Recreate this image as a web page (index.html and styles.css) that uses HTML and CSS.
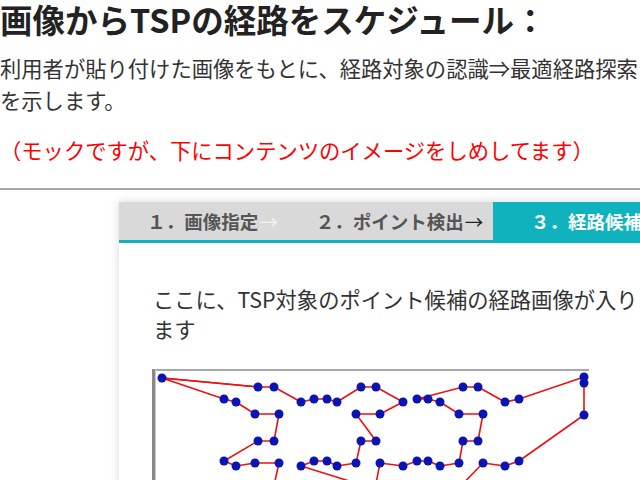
FILE: index.html
```html
<!DOCTYPE html>
<html lang="ja">
<head>
<meta charset="utf-8">
<title>TSP</title>
<link rel="stylesheet" href="styles.css">
</head>
<body>
<div class="page">
  <h1 class="title">画像からTSPの経路をスケジュール：</h1>
  <p class="lead">利用者が貼り付けた画像をもとに、経路対象の認識⇒最適経路探索を示します。</p>
  <p class="note">（モックですが、下にコンテンツのイメージをしめしてます）</p>
  <hr class="rule">
  <section class="panel">
    <div class="tabs">
      <div class="tab">１．画像指定<span class="arrow arrow-light">→</span></div>
      <div class="tab">２．ポイント検出<span class="arrow">→</span></div>
      <div class="tab tab-active">３．経路候補</div>
    </div>
    <div class="panel-body">
      <p class="desc">ここに、TSP対象のポイント候補の経路画像が入ります</p>
      <svg class="route" width="437" height="130" viewBox="0 0 437 130" xmlns="http://www.w3.org/2000/svg">
        <rect x="0" y="0" width="437" height="2" fill="#a8a8a8"/>
        <rect x="0" y="0" width="3" height="130" fill="#8a8a8a"/>
        <rect x="3" y="0" width="1" height="130" fill="#c8c8c8"/>
        <g fill="none" stroke="#ee1111" stroke-width="1.6" stroke-linejoin="round">
          <polyline points="106,18 10,9 72,30 84,33 103,45 127,45 122,72 106,72 72,92 84,97 103,94 127,94 119,130"/>
          <polyline points="10,9 106,18 122,18 149,33 162,30 175,30 185,33 209,18 224,18 251,33 228,45 204,45 224,72 209,72 204,94 185,97 175,92 162,92 149,97 255,130"/>
          <polyline points="221,130 228,94 251,97 265,92 276,92 288,97 307,94 311,72 326,72 331,45 307,45 288,33 276,30 265,30 311,18 326,18 353,33 367,30 432,8 432,14 432,46 367,92 353,97 331,94 296,130"/>
        </g>
        <g fill="#0a14b4">
          <circle cx="10" cy="9" r="4.5"/>
          <circle cx="106" cy="18" r="4.5"/><circle cx="122" cy="18" r="4.5"/>
          <circle cx="72" cy="30" r="4.5"/><circle cx="84" cy="33" r="4.5"/>
          <circle cx="149" cy="33" r="4.5"/><circle cx="162" cy="30" r="4.5"/><circle cx="175" cy="30" r="4.5"/><circle cx="185" cy="33" r="4.5"/>
          <circle cx="209" cy="18" r="4.5"/><circle cx="224" cy="18" r="4.5"/>
          <circle cx="103" cy="45" r="4.5"/><circle cx="127" cy="45" r="4.5"/>
          <circle cx="204" cy="45" r="4.5"/><circle cx="228" cy="45" r="4.5"/>
          <circle cx="106" cy="72" r="4.5"/><circle cx="122" cy="72" r="4.5"/>
          <circle cx="209" cy="72" r="4.5"/><circle cx="224" cy="72" r="4.5"/>
          <circle cx="72" cy="92" r="4.5"/><circle cx="84" cy="97" r="4.5"/><circle cx="103" cy="94" r="4.5"/><circle cx="127" cy="94" r="4.5"/>
          <circle cx="149" cy="97" r="4.5"/><circle cx="162" cy="92" r="4.5"/><circle cx="175" cy="92" r="4.5"/><circle cx="185" cy="97" r="4.5"/><circle cx="204" cy="94" r="4.5"/>
          <circle cx="228" cy="94" r="4.5"/>
          <circle cx="251" cy="33" r="4.5"/>
          <circle cx="265" cy="30" r="4.5"/><circle cx="276" cy="30" r="4.5"/><circle cx="288" cy="33" r="4.5"/>
          <circle cx="311" cy="18" r="4.5"/><circle cx="326" cy="18" r="4.5"/>
          <circle cx="353" cy="33" r="4.5"/><circle cx="367" cy="30" r="4.5"/>
          <circle cx="432" cy="8" r="4.5"/><circle cx="432" cy="14" r="4.5"/><circle cx="432" cy="46" r="4.5"/>
          <circle cx="307" cy="45" r="4.5"/><circle cx="331" cy="45" r="4.5"/>
          <circle cx="311" cy="72" r="4.5"/><circle cx="326" cy="72" r="4.5"/>
          <circle cx="251" cy="97" r="4.5"/><circle cx="265" cy="92" r="4.5"/><circle cx="276" cy="92" r="4.5"/><circle cx="288" cy="97" r="4.5"/><circle cx="307" cy="94" r="4.5"/>
          <circle cx="331" cy="94" r="4.5"/><circle cx="353" cy="97" r="4.5"/><circle cx="367" cy="92" r="4.5"/>
        </g>
      </svg>
    </div>
  </section>
</div>
</body>
</html>
```

FILE: styles.css
```css
html, body {
  margin: 0;
  padding: 0;
  overflow: hidden;
  background: #ffffff;
}

body {
  font-family: "Noto Sans CJK JP", "Noto Sans", sans-serif;
  color: #333333;
}

.page {
  width: 640px;
}

.title {
  margin: 0;
  font-size: 32.5px;
  line-height: 37px;
  font-weight: 700;
  color: #222222;
  white-space: nowrap;
}

.lead {
  margin: 15px 0 0;
  font-size: 21.3px;
  line-height: 32px;
  width: 640px;
}

.note {
  margin: 18px 0 0;
  font-size: 21.3px;
  line-height: 32px;
  color: #ff0000;
  white-space: nowrap;
}

.rule {
  border: 0;
  border-top: 2px solid #a6a6a6;
  height: 0;
  margin: 22px 0 12px;
}

.panel {
  margin-left: 119px;
  width: 720px;
  height: 300px;
  background: #ffffff;
  box-shadow: 0 0 9px rgba(0, 0, 0, 0.16);
}

.tabs {
  display: grid;
  grid-template-columns: repeat(3, 187px);
  height: 38px;
  background: #d9d9d9;
  border-bottom: 3px solid #10b3bd;
}

.tab {
  display: flex;
  align-items: center;
  justify-content: center;
  font-size: 18.5px;
  font-weight: 700;
  color: #555555;
  white-space: nowrap;
}

.tab-active {
  background: #10b3bd;
  color: #ffffff;
}

.arrow {
  font-weight: 400;
  color: #222222;
  margin-left: 1px;
}

.arrow-light {
  color: #f4f4f4;
}

.panel-body {
  padding: 41px 0 0 34px;
}

.desc {
  margin: 0;
  width: 490px;
  font-size: 21.3px;
  line-height: 30px;
  color: #333333;
}

.route {
  display: block;
  margin: 25px 0 0 -1px;
}
```
